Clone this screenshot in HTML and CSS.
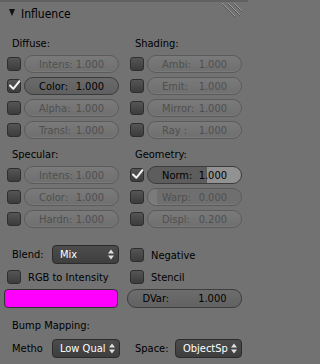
FILE: index.html
```html
<!DOCTYPE html>
<html>
<head>
<meta charset="utf-8">
<link rel="stylesheet" href="styles.css">
</head>
<body>
<div class="panel">
  <div class="header">
    <span class="tri"></span><span class="title">Influence</span>
    <svg class="grip" width="24" height="18" viewBox="0 0 24 18">
      <g stroke-width="1">
        <line x1="1" y1="1" x2="14" y2="14" stroke="#9a9a9a"/>
        <line x1="1" y1="2" x2="14" y2="15" stroke="#555"/>
        <line x1="7" y1="1" x2="19" y2="13" stroke="#9a9a9a"/>
        <line x1="7" y1="2" x2="19" y2="14" stroke="#555"/>
        <line x1="13" y1="1" x2="21" y2="9" stroke="#9a9a9a"/>
        <line x1="13" y1="2" x2="21" y2="10" stroke="#555"/>
      </g>
    </svg>
  </div>

  <div class="sec first">
    <div class="col">
      <div class="label">Diffuse:</div>
      <div class="rows">
        <div class="row"><span class="cb"></span><div class="slider off"><span class="in"><span>Intens:</span><span>1.000</span></span></div></div>
        <div class="row"><span class="cb on"><svg viewBox="0 0 14 14"><polyline points="3,6.5 6.3,9.8 12.5,2.2"/></svg></span><div class="slider act"><span class="in"><span>Color:</span><span>1.000</span></span></div></div>
        <div class="row"><span class="cb"></span><div class="slider off"><span class="in"><span>Alpha:</span><span>1.000</span></span></div></div>
        <div class="row"><span class="cb"></span><div class="slider off"><span class="in"><span>Transl:</span><span>1.000</span></span></div></div>
      </div>
    </div>
    <div class="col">
      <div class="label">Shading:</div>
      <div class="rows">
        <div class="row"><span class="cb"></span><div class="slider off"><span class="in"><span>Ambi:</span><span>1.000</span></span></div></div>
        <div class="row"><span class="cb"></span><div class="slider off"><span class="in"><span>Emit:</span><span>1.000</span></span></div></div>
        <div class="row"><span class="cb"></span><div class="slider off"><span class="in"><span>Mirror:</span><span>1.000</span></span></div></div>
        <div class="row"><span class="cb"></span><div class="slider off"><span class="in"><span>Ray :</span><span>1.000</span></span></div></div>
      </div>
    </div>
  </div>

  <div class="sec second">
    <div class="col">
      <div class="label">Specular:</div>
      <div class="rows">
        <div class="row"><span class="cb"></span><div class="slider off"><span class="in"><span>Intens:</span><span>1.000</span></span></div></div>
        <div class="row"><span class="cb"></span><div class="slider off"><span class="in"><span>Color:</span><span>1.000</span></span></div></div>
        <div class="row"><span class="cb"></span><div class="slider off"><span class="in"><span>Hardn:</span><span>1.000</span></span></div></div>
      </div>
    </div>
    <div class="col">
      <div class="label">Geometry:</div>
      <div class="rows">
        <div class="row"><span class="cb on"><svg viewBox="0 0 14 14"><polyline points="3,6.5 6.3,9.8 12.5,2.2"/></svg></span><div class="slider norm" style="--fill:59px"><span class="in"><span>Norm:</span><span>1.000</span></span></div></div>
        <div class="row"><span class="cb"></span><div class="slider off warp" style="--fill:9px"><span class="in"><span>Warp:</span><span>0.000</span></span></div></div>
        <div class="row"><span class="cb"></span><div class="slider off"><span class="in"><span>Displ:</span><span>0.200</span></span></div></div>
      </div>
    </div>
  </div>

  <div class="sec blend">
    <div class="field">
      <span class="flabel">Blend:</span>
      <div class="menu"><span class="mtext">Mix</span><svg class="arrows" width="6" height="11" viewBox="0 0 6 11"><polygon points="0,4.5 3,0.5 6,4.5"/><polygon points="0,6.5 3,10.5 6,6.5"/></svg></div>
    </div>
    <div class="toggle"><span class="cb"></span><span class="ttext">Negative</span></div>
  </div>

  <div class="sec trow">
    <div class="toggle"><span class="cb"></span><span class="ttext">RGB to Intensity</span></div>
    <div class="toggle"><span class="cb"></span><span class="ttext">Stencil</span></div>
  </div>

  <div class="sec crow">
    <div class="swatch"></div>
    <div class="num"><span class="nin"><span>DVar:</span><span>1.000</span></span></div>
  </div>

  <div class="sec bump">
    <div class="label">Bump Mapping:</div>
  </div>

  <div class="sec mrow">
    <div class="field">
      <span class="flabel">Metho</span>
      <div class="menu"><span class="mtext">Low Qual</span><svg class="arrows" width="6" height="11" viewBox="0 0 6 11"><polygon points="0,4.5 3,0.5 6,4.5"/><polygon points="0,6.5 3,10.5 6,6.5"/></svg></div>
    </div>
    <div class="field">
      <span class="flabel">Space:</span>
      <div class="menu"><span class="mtext">ObjectSp</span><svg class="arrows" width="6" height="11" viewBox="0 0 6 11"><polygon points="0,4.5 3,0.5 6,4.5"/><polygon points="0,6.5 3,10.5 6,6.5"/></svg></div>
    </div>
  </div>
</div>
</body>
</html>
```

FILE: styles.css
```css
html, body {
  margin: 0;
  padding: 0;
  background: #727272;
}
body {
  width: 248px;
  height: 364px;
  overflow: hidden;
  font-family: "DejaVu Sans Condensed", "DejaVu Sans", sans-serif;
  font-stretch: condensed;
  font-size: 11px;
  color: #000;
}
.panel {
  position: relative;
  border-top: 2px solid #616161;
  height: 362px;
}
.header {
  position: relative;
  height: 24px;
  display: flex;
  align-items: center;
  padding-left: 9px;
}
.tri {
  width: 0;
  height: 0;
  border-left: 3.5px solid transparent;
  border-right: 3.5px solid transparent;
  border-top: 7px solid #111;
  margin-top: -3px;
}
.title {
  font-size: 12px;
  margin-left: 6px;
  color: #000;
}
.grip {
  position: absolute;
  right: 3px;
  top: 0;
}
.sec {
  display: grid;
  grid-template-columns: 115px 115px;
  column-gap: 8px;
  padding-left: 4px;
}
.first { margin-top: 8px; }
.second { margin-top: 6px; }
.blend { margin-top: 17px; }
.trow { margin-top: 2px; }
.crow { margin-top: 2px; }
.bump { margin-top: 8px; }
.mrow { margin-top: 3px; }

.label {
  height: 20px;
  line-height: 20px;
  padding-left: 8px;
}
.rows {
  margin-top: 1px;
  display: flex;
  flex-direction: column;
  gap: 4px;
}
.row {
  height: 18px;
  display: flex;
  align-items: center;
}
.cb {
  position: relative;
  box-sizing: border-box;
  width: 14px;
  height: 14px;
  margin-left: 3px;
  margin-right: 3px;
  flex: none;
  border-radius: 3px;
  border: 1px solid #2e2e2e;
  background: linear-gradient(#555555, #3c3c3c);
}
.cb svg {
  position: absolute;
  left: -1px;
  top: -1px;
  width: 14px;
  height: 14px;
  overflow: visible;
}
.cb svg polyline {
  fill: none;
  stroke: #f2f2f2;
  stroke-width: 2;
  stroke-linecap: round;
  stroke-linejoin: round;
}
.slider {
  box-sizing: border-box;
  width: 95px;
  height: 18px;
  border-radius: 9px;
  display: flex;
  align-items: center;
  justify-content: center;
  white-space: pre;
}
.slider .in, .num .nin {
  display: flex;
  justify-content: space-between;
  width: 65px;
}
.off {
  border: 1px solid #5b5b5b;
  background: linear-gradient(#7a7a7a, #6f6f6f);
  color: #4f4f4f;
  box-shadow: inset 0 -1px 0 rgba(255,255,255,0.08);
}
.act {
  border: 1px solid #3c3c3c;
  background: linear-gradient(#6a6a6a, #5f5f5f);
  color: #000;
}
.norm {
  border: 1px solid #3c3c3c;
  background: linear-gradient(to right, #5d5d5d 0 var(--fill), #929292 var(--fill));
  color: #000;
}
.warp {
  background: linear-gradient(to right, #7b7b7b 0 var(--fill), #6f6f6f var(--fill));
}
.toggle {
  height: 20px;
  display: flex;
  align-items: center;
}
.ttext {
  margin-left: 4px;
}
.field {
  display: flex;
  align-items: center;
  height: 19px;
}
.flabel {
  width: 40px;
  padding-left: 8px;
  flex: none;
}
.menu {
  box-sizing: border-box;
  flex: 1;
  height: 19px;
  border-radius: 4px;
  border: 1px solid #2b2b2b;
  background: linear-gradient(#4c4c4c, #3e3e3e);
  color: #fff;
  display: flex;
  align-items: center;
  padding-left: 7px;
  padding-right: 4px;
  overflow: hidden;
}
.mtext {
  flex: 1;
  white-space: nowrap;
  overflow: hidden;
}
.arrows polygon {
  fill: #e0e0e0;
}
.mrow .field:first-child .menu {
  margin-right: -1px;
}
.swatch {
  box-sizing: border-box;
  height: 19px;
  width: 114px;
  border-radius: 4px;
  border: 1px solid #333;
  background: #ff00ff;
}
.num {
  box-sizing: border-box;
  height: 19px;
  border-radius: 9px;
  border: 1px solid #3e3e3e;
  background: linear-gradient(#6c6c6c, #626262);
  display: flex;
  align-items: center;
  justify-content: center;
}
.num .nin {
  width: 84px;
}
```
